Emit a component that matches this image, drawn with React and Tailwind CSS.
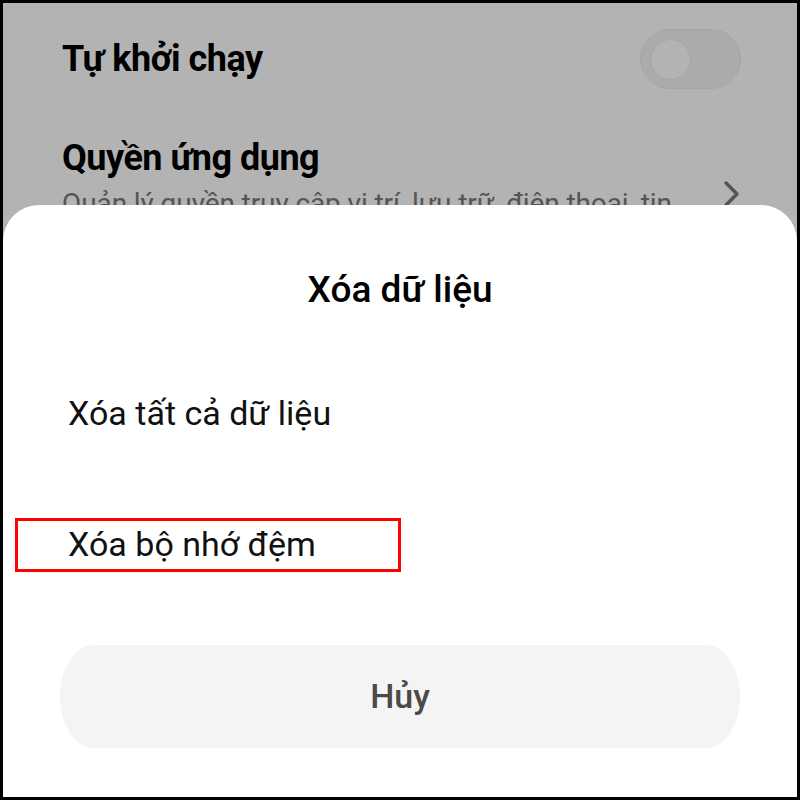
import React from "react";

const App = () => {
  return (
    <div className="w-[800px] h-[800px] bg-black p-[3px]" style={{ fontFamily: "Roboto, 'Noto Sans', sans-serif" }}>
      <div className="relative w-full h-full bg-[#b3b3b3] overflow-hidden">
        {/* Settings behind the sheet */}
        <div className="pl-[59px] pr-[56px]">
          <div className="flex items-center justify-between h-[114px] pb-[2px]">
            <h2 className="text-[36px] font-bold text-black tracking-[-0.5px] leading-[44px]">Tự khởi chạy</h2>
            <div className="w-[101px] h-[60px] rounded-full bg-[#ababab] border border-[#a6a6a6] flex items-center pl-[9px]">
              <div className="w-[41px] h-[41px] rounded-full bg-[#b3b3b3] border border-[#a5a5a5]" />
            </div>
          </div>
          <div className="flex items-start justify-between mt-[19px]">
            <div>
              <h2 className="text-[36px] font-bold text-black tracking-[-0.5px] leading-[44px]">Quyền ứng dụng</h2>
              <p className="mt-[4px] text-[28px] text-[#555] leading-[40px] tracking-[-0.1px] whitespace-nowrap">Quản lý quyền truy cập vị trí, lưu trữ, điện thoại, tin</p>
            </div>
            <svg width="20" height="30" viewBox="0 0 20 30" className="mt-[44px] shrink-0">
              <path d="M5 3 L16 14 L5 25" fill="none" stroke="#555" strokeWidth="3.5" strokeLinecap="round" strokeLinejoin="round" />
            </svg>
          </div>
        </div>

        {/* Bottom sheet */}
        <div className="absolute left-0 right-0 top-[202px] bottom-0 bg-white rounded-t-[36px] flex flex-col">
          <h1 className="text-center text-[37px] font-medium text-black mt-[63px] leading-[44px]">Xóa dữ liệu</h1>
          <div className="mt-[81px] pl-[65px] text-[34px] text-[#111] leading-[40px]">Xóa tất cả dữ liệu</div>
          <div className="mt-[85px] ml-[12px] w-[386px] h-[54px] border-[3px] border-[#ff0000] pl-[50px] pt-[1px] text-[34px] text-[#111] leading-[44px]">
            Xóa bộ nhớ đệm
          </div>
          <button className="mx-[57px] mt-[73px] h-[103px] rounded-[34px/51px] bg-[#f4f4f4] text-[34px] text-[#4a4a4a] font-medium">
            Hủy
          </button>
        </div>
      </div>
    </div>
  );
};

export default App;
